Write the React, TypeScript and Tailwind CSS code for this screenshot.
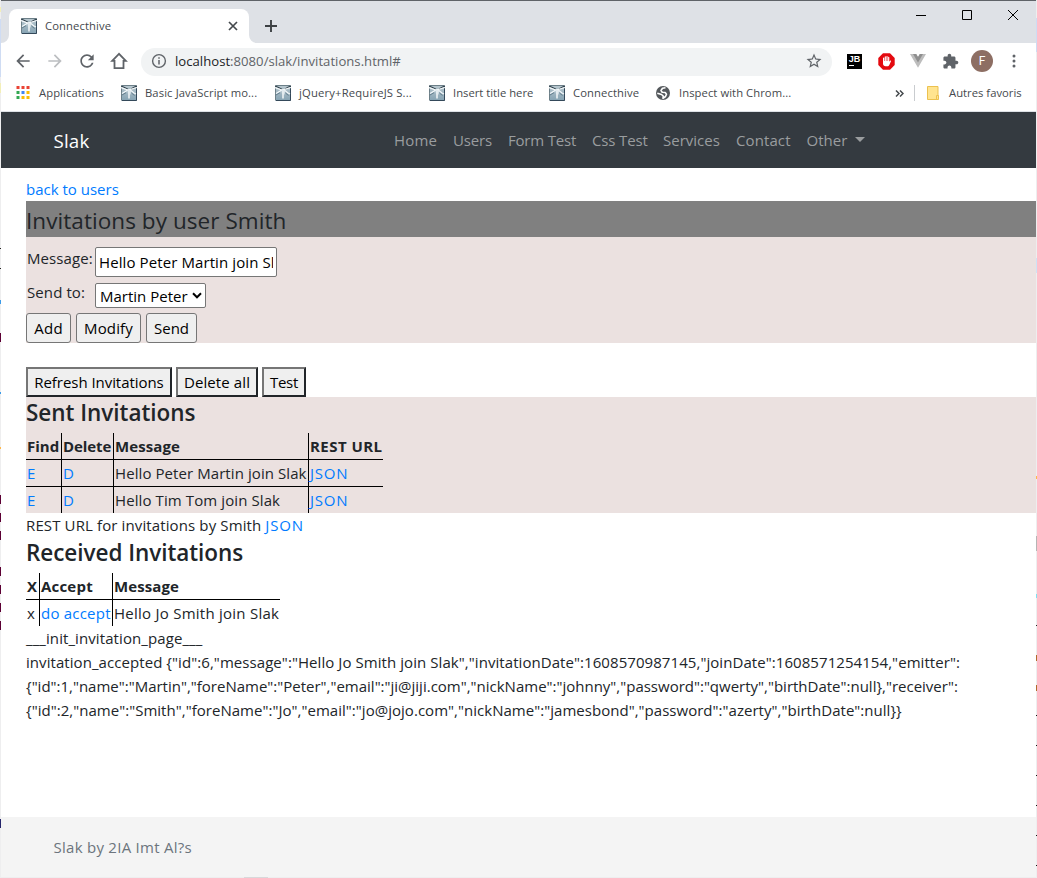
import type { ReactNode } from "react";

function Favicon() {
  return (
    <svg width="16" height="16" viewBox="0 0 16 16" className="shrink-0">
      <defs>
        <linearGradient id="sky" x1="0" y1="0" x2="0" y2="1">
          <stop offset="0" stopColor="#b9c8cf" />
          <stop offset="1" stopColor="#86a3b3" />
        </linearGradient>
      </defs>
      <rect x="0.5" y="0.5" width="15" height="15" rx="0.5" fill="url(#sky)" stroke="#6c7f88" />
      <path d="M15.500 1v14.500H1" fill="none" stroke="#34495a" />
      <path d="M0 1l3 1.200 4 2M16 1l-2.500 1-3.500 2" fill="none" stroke="#2f3f49" strokeWidth="1.100" />
      <path d="M0 2.500l7 2.500 9-2.500M1 8.500l6-3.500 3 .5 3 2.500 2 1" fill="none" stroke="#f4f8fa" strokeWidth="1.200" />
      <path d="M6.500 5l3.500.5-.5 4-2.500-.5z" fill="#e3ebef" />
      <path d="M8 9v4.500" stroke="#f4f7f8" strokeWidth="1.500" />
      <path d="M1 10l4-2.300M10.500 8l3 2.500" stroke="#54707f" strokeWidth=".8" />
    </svg>
  );
}

function TabStrip() {
  return (
    <div className="flex h-[42px] bg-[#dee1e6]">
      <div className="flex h-full w-2 items-end bg-[#dee1e6]">
        <svg width="8" height="8" viewBox="0 0 8 8"><path d="M8 0v8H0a8 8 0 0 0 8-8z" fill="#fff" /></svg>
      </div>
      <div className="mt-2 flex h-[34px] w-[240px] items-center rounded-t-lg bg-white pl-3 pr-[11px]">
        <Favicon />
        <span className="ml-2 text-[11.25px] leading-4 tracking-[0.09px] text-[#45494d]">Connecthive</span>
        <svg className="ml-auto" width="10" height="10" viewBox="0 0 10 10"><path d="M1 1l8 8M9 1L1 9" stroke="#45494d" strokeWidth="1.700" /></svg>
      </div>
      <div className="flex w-2 items-end">
        <svg width="8" height="8" viewBox="0 0 8 8"><path d="M0 0v8h8a8 8 0 0 1-8-8z" fill="#fff" /></svg>
      </div>
      <svg className="ml-2 mt-[19px]" width="12" height="12" viewBox="0 0 12 12"><path d="M6 0v12M0 6h12" stroke="#3c4043" strokeWidth="1.900" /></svg>
      <div className="ml-auto flex gap-9 pr-[18px] pt-[9px]">
        <svg width="10" height="10" viewBox="0 0 10 10"><path d="M0 5.500h10" stroke="#000" /></svg>
        <svg width="10" height="10" viewBox="0 0 10 10"><path d="M.5.5h9v9h-9z" fill="none" stroke="#000" /></svg>
        <svg width="10" height="10" viewBox="0 0 10 10"><path d="M0 0l10 10M10 0L0 10" stroke="#000" /></svg>
      </div>
    </div>
  );
}

function MaterialIcon({ d, color = "#5f6368", size = 20, className = "" }: { d: string; color?: string; size?: number; className?: string }) {
  return (
    <svg width={size} height={size} viewBox="0 0 24 24" className={className} fill={color}>
      <path d={d} />
    </svg>
  );
}

function Toolbar() {
  return (
    <div className="flex h-[37px] items-center bg-white pb-px pl-3">
      <MaterialIcon d="M20 11H7.830l5.590-5.590L12 4l-8 8 8 8 1.410-1.410L7.830 13H20v-2z" />
      <MaterialIcon className="ml-3" color="#bcbec1" d="M12 4l-1.410 1.410L16.170 11H4v2h12.170l-5.580 5.590L12 20l8-8z" />
      <MaterialIcon className="ml-3" d="M17.650 6.350C16.200 4.900 14.210 4 12 4c-4.420 0-7.990 3.580-7.990 8s3.570 8 7.990 8c3.730 0 6.840-2.550 7.730-6h-2.080c-.82 2.330-3.040 4-5.650 4-3.310 0-6-2.690-6-6s2.690-6 6-6c1.660 0 3.140.69 4.220 1.780L13 11h7V4l-2.350 2.350z" />
      <svg className="ml-3" width="20" height="20" viewBox="0 0 20 20"><path d="M10 2.900L3.200 9.900h2.300v7.200h9V9.900h2.300z" fill="none" stroke="#5f6368" strokeWidth="1.800" /></svg>
      <div className="ml-3 mt-px flex h-7 w-[691px] items-center rounded-full bg-[#f1f3f4] pb-px pl-2.5 pr-2">
        <svg width="16" height="16" viewBox="0 0 16 16">
          <circle cx="8" cy="8" r="6.400" fill="none" stroke="#5f6368" strokeWidth="1.400" />
          <path d="M8 7v4.500M8 4.300v1.500" stroke="#5f6368" strokeWidth="1.500" />
        </svg>
        <span className="ml-2 text-[13.125px] leading-5 tracking-[0.02px] text-[#5f6368]"><span className="text-[#202124]">localhost</span>:8080/slak/invitations.html#</span>
        <MaterialIcon className="ml-auto mr-px" size={18} d="M22 9.240l-7.190-.62L12 2 9.190 8.630 2 9.240l5.460 4.730L5.820 21 12 17.270 18.180 21l-1.630-7.030L22 9.240zM12 15.400l-3.760 2.270 1-4.280-3.320-2.880 4.380-.38L12 6.100l1.710 4.040 4.380.38-3.320 2.880 1 4.280L12 15.400z" />
      </div>
      <div className="ml-[15px] flex h-[15px] w-[15px] flex-col items-center bg-black">
        <span className="font-[Liberation_Sans] text-[9px] font-bold leading-[10px] text-white">JB</span>
        <span className="ml-0.5 mt-px h-px w-[5px] self-start bg-white" />
      </div>
      <svg className="ml-4" width="17" height="17" viewBox="0 0 17 17">
        <path d="M5 .3h7L16.700 5v7L12 16.700H5L.3 12V5z" fill="#e4090f" />
        <path d="M5.600 9V5.200M7.300 8.500V3.900M9 8.500V3.500M10.700 9V4.400" stroke="#fff" strokeWidth="1.200" strokeLinecap="round" />
        <path d="M5 8h6.300v.8l.9-1.100c.5-.5 1.100 0 .8.500l-1.700 3.800c-.4.900-1 1.300-1.900 1.300H7.600C6.100 13.300 5 12.200 5 10.800z" fill="#fff" />
      </svg>
      <svg className="ml-[15px]" width="16" height="14" viewBox="0 0 16 14">
        <path d="M0 0h6.200L8 3l1.800-3H16L8 13.800z" fill="#bdbdbd" />
        <path d="M3 0h3.200L8 3l1.800-3H13L8 8.600z" fill="#8f8f8f" />
      </svg>
      <MaterialIcon className="ml-4" size={17} d="M20.500 11H19V7c0-1.100-.9-2-2-2h-4V3.500C13 2.120 11.880 1 10.500 1S8 2.120 8 3.500V5H4c-1.100 0-1.990.9-1.990 2v3.800H3.500c1.490 0 2.700 1.210 2.700 2.700s-1.210 2.700-2.700 2.700H2V20c0 1.100.9 2 2 2h3.800v-1.500c0-1.490 1.210-2.700 2.700-2.700s2.700 1.210 2.700 2.700V22H17c1.100 0 2-.9 2-2v-4h1.500c1.380 0 2.500-1.120 2.500-2.500S21.880 11 20.500 11z" />
      <div className="ml-3 flex h-[22px] w-[22px] items-center justify-center rounded-full bg-[#8d6e63] font-[Roboto] text-[12px] text-white">F</div>
      <svg className="ml-[19px]" width="4" height="14" viewBox="0 0 4 14" fill="#5f6368"><circle cx="2" cy="2" r="1.500" /><circle cx="2" cy="7" r="1.500" /><circle cx="2" cy="12" r="1.500" /></svg>
    </div>
  );
}

function Bookmark({ icon, width, children }: { icon: ReactNode; width: string; children: ReactNode }) {
  return <div className={`flex shrink-0 items-center gap-2 ${width}`}>{icon}{children}</div>;
}

const appDots = ["#ea4335", "#ea4335", "#ea4335", "#34a853", "#4285f4", "#fbbc05", "#34a853", "#fbbc05", "#fbbc05"];

function Bookmarks() {
  return (
    <div className="flex h-[31px] items-start whitespace-nowrap bg-white pl-[15px] pt-[5px] text-[11.25px] leading-4 text-[#45494d]">
      <div className="flex w-[105px] shrink-0 items-center">
        <svg width="14" height="14" viewBox="0 0 14 14">
          {appDots.map((c, i) => <rect key={i} x={(i % 3) * 5 + 0.5} y={Math.floor(i / 3) * 5} width="3" height="3" fill={c} />)}
        </svg>
        <span className="ml-[9px] tracking-[0.08px]">Applications</span>
      </div>
      <Bookmark width="w-[154px]" icon={<Favicon />}><span className="tracking-[0.1px]">Basic JavaScript mo...</span></Bookmark>
      <Bookmark width="w-[154px]" icon={<Favicon />}><span className="tracking-[0.17px]">jQuery+RequireJS S...</span></Bookmark>
      <Bookmark width="w-[120px]" icon={<Favicon />}><span>Insert title here</span></Bookmark>
      <Bookmark width="w-[106px]" icon={<Favicon />}><span className="tracking-[0.09px]">Connecthive</span></Bookmark>
      <Bookmark width="w-[240px]" icon={
        <svg width="16" height="16" viewBox="0 0 16 16">
          <circle cx="8" cy="8" r="7" fill="#54585c" />
          <path d="M10.500 2.800L7.500 3.300 6 5.500l1.200 1.700 3 .3 1.300 1.700-1 2.300-2.500 1.800.2-2.300L6.500 9.500 2.300 8.300" fill="none" stroke="#fff" strokeWidth="1.600" strokeLinejoin="round" />
        </svg>
      }><span className="tracking-[0.06px]">Inspect with Chrom...</span></Bookmark>
      <svg className="mt-[5px]" width="9" height="7" viewBox="0 0 9 7"><path d="M1 .5l3 3-3 3M5 .5l3 3-3 3" fill="none" stroke="#45494d" strokeWidth="1.500" /></svg>
      <div className="ml-2.5 h-4 w-px bg-[#c9cccf]" />
      <svg className="ml-3 mt-px" width="12" height="14" viewBox="0 0 12 14"><path d="M.5.5h10.500v13H.5z" fill="#ffe48f" stroke="#ecc14f" /><path d="M9.500 9.500h2v4h-2z" fill="#ffe48f" stroke="#ecc14f" /></svg>
      <span className="ml-2.5 tracking-[0.02px]">Autres favoris</span>
    </div>
  );
}

function Link({ children, className = "" }: { children: ReactNode; className?: string }) {
  return <a href="#" className={`text-[#007bff] ${className}`}>{children}</a>;
}

function NavBar() {
  return (
    <nav className="flex h-14 items-center bg-[#343a40] text-[#9a9d9f]">
      <span className="w-[341px] pl-[52.5px] pt-px text-[18.75px] tracking-[0.15px] text-white">Slak</span>
      <span className="ml-[52px] w-[59px] tracking-[0.15px]">Home</span>
      <span className="w-[55px] tracking-[-0.15px]">Users</span>
      <span className="w-[84px] tracking-[-0.2px]">Form Test</span>
      <span className="w-[71px] tracking-[-0.15px]">Css Test</span>
      <span className="w-[73px]">Services</span>
      <span className="w-[70.500px] tracking-[0.1px]">Contact</span>
      <span className="tracking-[0.02px]">Other</span>
      <svg className="mb-0.5 ml-2" width="10" height="5" viewBox="0 0 10 5"><path d="M0 0h10L5 5z" fill="#9a9d9f" /></svg>
    </nav>
  );
}

function Button({ children, className = "" }: { children: ReactNode; className?: string }) {
  return <button className={`h-[30px] rounded-[3px] border border-[#767676] bg-[#efefef] text-black ${className}`}>{children}</button>;
}

function OutsetButton({ children, className = "" }: { children: ReactNode; className?: string }) {
  return <button className={`h-[30px] border-2 border-b-[#212529] border-l-[#767676] border-r-[#212529] border-t-[#767676] bg-[#efefef] text-black ${className}`}>{children}</button>;
}

function InvitationForm() {
  return (
    <section className="h-[106px] bg-[#ebe1e0] pt-2.5">
      <div className="flex h-9">
        <label className="w-[69px] pl-px leading-[22px] tracking-[0.1px]">Message:</label>
        <input className="h-[30px] w-[182px] rounded-[2px] border border-[#767676] bg-white px-[3px] tracking-[0.1px] text-black" defaultValue="Hello Peter Martin join Slak" />
      </div>
      <div className="flex h-[30px]">
        <label className="w-[69px] pl-px leading-[19px] tracking-[0.1px]">Send to:</label>
        <button className="flex h-[25px] w-[111px] items-center rounded-[2px] border border-[#767676] bg-white pl-1 pt-px text-black">
          Martin Peter
          <svg className="mb-0.5 ml-[4px]" width="10" height="7" viewBox="0 0 10 7"><path d="M1 1.300l4 4 4-4" fill="none" stroke="#000" strokeWidth="2" /></svg>
        </button>
      </div>
      <div className="flex gap-[5px]">
        <Button className="w-[45px] tracking-[0.3px]">Add</Button>
        <Button className="w-[65px] tracking-[0.15px]">Modify</Button>
        <Button className="w-[51px]">Send</Button>
      </div>
    </section>
  );
}

const left = "border-l border-black pl-px";
const bottom = "border-b border-black";

function SentInvitations() {
  return (
    <section className="h-[116px] bg-[#ebe1e0]">
      <h2 className="h-9 text-[22.5px] font-semibold leading-[32px] tracking-[-0.03px]">Sent Invitations</h2>
      <div className="grid w-[357px] grid-cols-[35px_52px_195px_75px] grid-rows-[27px_27px_26px] whitespace-nowrap leading-[27px]">
        <b className={`pl-px ${bottom}`}>Find</b>
        <b className={`tracking-[-0.1px] ${left} ${bottom}`}>Delete</b>
        <b className={`tracking-[0.1px] ${left} ${bottom}`}>Message</b>
        <b className={`tracking-[0.45px] ${left} ${bottom}`}>REST URL</b>
        <span className={`pl-px ${bottom}`}><Link>E</Link></span>
        <span className={`${left} ${bottom}`}><Link>D</Link></span>
        <span className={`tracking-[0.08px] ${left} ${bottom}`}>Hello Peter Martin join Slak</span>
        <span className={`${left} ${bottom}`}><Link className="tracking-[0.8px]">JSON</Link></span>
        <span className="pl-px"><Link>E</Link></span>
        <span className={left}><Link>D</Link></span>
        <span className={`tracking-[0.1px] ${left}`}>Hello Tim Tom join Slak</span>
        <span className={left}><Link className="tracking-[0.8px]">JSON</Link></span>
      </div>
    </section>
  );
}

function ReceivedInvitations() {
  return (
    <section>
      <h2 className="h-9 text-[22.5px] font-semibold leading-[32px] tracking-[-0.05px]">Received Invitations</h2>
      <div className="grid w-[254px] grid-cols-[13px_73px_168px] grid-rows-[27px_26px] whitespace-nowrap leading-[27px]">
        <b className={`pl-px ${bottom}`}>X</b>
        <b className={`tracking-[0.2px] ${left} ${bottom}`}>Accept</b>
        <b className={`tracking-[0.1px] ${left} ${bottom}`}>Message</b>
        <span className="pl-px">x</span>
        <span className={left}><Link className="tracking-[0.22px]">do accept</Link></span>
        <span className={`tracking-[0.25px] ${left}`}>Hello Jo Smith join Slak</span>
      </div>
    </section>
  );
}

const leftMarks = [
  { h: 5, c: "#f3efb8", gap: 7 }, { h: 58, c: "#cfdcf3", gap: 7 }, { h: 10, c: "#f3efb8", gap: 6 },
  { h: 1, c: "#222", gap: 155 }, { h: 1, c: "#222", gap: 19 }, { h: 4, c: "#3c9be8", gap: 31 },
  { h: 9, c: "#5c0034", gap: 29 }, { h: 2, c: "#3c9be8", gap: 50 }, { h: 2, c: "#ffb84a", gap: 53 },
  { h: 9, c: "#5c0034", gap: 46 }, { h: 9, c: "#5c0034", gap: 9 }, { h: 9, c: "#5c0034", gap: 9 },
  { h: 9, c: "#5c0034", gap: 27 }, { h: 9, c: "#5c0034", gap: 9 }, { h: 9, c: "#5c0034", gap: 9 },
  { h: 9, c: "#5c0034", gap: 9 }, { h: 9, c: "#25256b", gap: 189 },
];
const rightMarks = [
  { h: 34, c: "#cfdcf3", gap: 18 }, { h: 15, c: "#cfe2f5", gap: 206 }, { h: 3, c: "#ffb84a", gap: 203 },
  { h: 15, c: "#b5b5b5", gap: 57 }, { h: 4, c: "#7fe0f0", gap: 43 }, { h: 1, c: "#222", gap: 27 },
  { h: 6, c: "#b06a2c", gap: 29 }, { h: 6, c: "#b06a2c", gap: 24 }, { h: 1, c: "#111", gap: 24 },
  { h: 1, c: "#111", gap: 29 }, { h: 1, c: "#111", gap: 29 }, { h: 1, c: "#111", gap: 29 }, { h: 1, c: "#111", gap: 29 }, { h: 1, c: "#111", gap: 29 },
];

function Edge({ marks }: { marks: typeof leftMarks }) {
  return (
    <div className="flex h-full w-px shrink-0 flex-col overflow-hidden bg-[#eeeeef]">
      {marks.map((m, i) => <div key={i} className="w-px shrink-0" style={{ height: m.h, marginTop: m.gap, background: m.c }} />)}
    </div>
  );
}

export default function App() {
  return (
    <div className="flex h-[878px] w-[1037px] overflow-hidden bg-white font-['Open_Sans','Noto_Sans',sans-serif] text-[15px] leading-6 text-[#212529]">
      <Edge marks={leftMarks} />
      <div className="flex min-w-0 flex-1 flex-col">
        <div className="h-px bg-[#5f6368]" />
        <TabStrip />
        <Toolbar />
        <Bookmarks />
        <div className="h-px bg-[#dee1e6]" />
        <NavBar />
        <main className="flex-1 pl-[25px] pt-[9px]">
          <div className="h-6"><Link>back to users</Link></div>
          <h1 className="h-9 bg-[#808080] text-[22.5px] leading-[40px] tracking-[0.06px]">Invitations by user Smith</h1>
          <InvitationForm />
          <div className="flex gap-1 pt-6">
            <OutsetButton className="w-[146px] tracking-[-0.05px]">Refresh Invitations</OutsetButton>
            <OutsetButton className="w-[82px] tracking-[0.1px]">Delete all</OutsetButton>
            <OutsetButton className="w-[44px] tracking-[-0.3px]">Test</OutsetButton>
          </div>
          <SentInvitations />
          <p className="tracking-[0.12px]">REST URL for invitations by Smith <Link className="tracking-[0.8px]">JSON</Link></p>
          <ReceivedInvitations />
          <div className="whitespace-nowrap">
            <p className="tracking-[0.09px]">___init_invitation_page___</p>
            <p className="tracking-[0.067px]">{'invitation_accepted {"id":6,"message":"Hello Jo Smith join Slak","invitationDate":1608570987145,"joinDate":1608571254154,"emitter":'}</p>
            <p>{'{"id":1,"name":"Martin","foreName":"Peter","email":"ji@jiji.com","nickName":"johnny","password":"qwerty","birthDate":null},"receiver":'}</p>
            <p className="tracking-[0.03px]">{'{"id":2,"name":"Smith","foreName":"Jo","email":"jo@jojo.com","nickName":"jamesbond","password":"azerty","birthDate":null}}'}</p>
          </div>
        </main>
        <footer className="flex h-[61px] flex-col bg-[#f4f4f4] text-[#6c757d]">
          <p className="h-[60px] pl-[52.5px] leading-[60px] tracking-[0.27px]">Slak by 2IA Imt Al?s</p>
          <div className="h-px bg-[#eeeeef] pl-[243px]"><div className="h-px w-6 bg-[#d8d8da]" /></div>
        </footer>
      </div>
      <Edge marks={rightMarks} />
    </div>
  );
}
